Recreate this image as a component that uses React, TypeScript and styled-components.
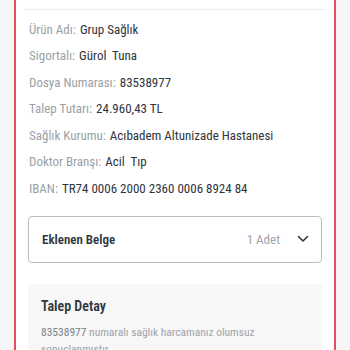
import React from "react";
import styled, { createGlobalStyle } from "styled-components";

const Global = createGlobalStyle`
  html, body { margin: 0; padding: 0; background: #f6f5f7; }
  body {
    font-family: "Roboto Condensed", "Roboto", sans-serif;
    -webkit-font-smoothing: antialiased;
  }
`;

const Page = styled.div`
  width: 350px;
  height: 350px;
  overflow: hidden;
  padding: 0 14px;
  box-sizing: border-box;
  background: #f6f5f7;
`;

const Card = styled.div`
  background: #ffffff;
  border-left: 2px solid #e2505b;
  border-right: 2px solid #e2505b;
  height: 100%;
  padding: 9px 12px 0;
  box-sizing: border-box;
`;

const Divider = styled.div`
  height: 1px;
  background: #e9ecf0;
  margin: 0 -4px 0 -4px;
`;

const InfoList = styled.div`
  display: flex;
  flex-direction: column;
  padding: 6px 0 0 1px;
`;

const Row = styled.div`
  height: 26.5px;
  display: flex;
  align-items: center;
  font-size: 13px;
  white-space: pre;
`;

const Label = styled.span`
  color: #9a9fa6;
  font-weight: 400;
  margin-right: 4px;
`;

const Value = styled.span`
  color: #30343c;
  font-weight: 400;
`;

const Accordion = styled.div`
  margin-top: 14px;
  height: 47px;
  box-sizing: border-box;
  border: 1px solid #bcbec2;
  border-radius: 4px;
  display: flex;
  align-items: center;
  padding: 0 12px 0 13px;
`;

const AccTitle = styled.div`
  flex: 1;
  font-size: 13px;
  font-weight: 600;
  color: #2f3640;
`;

const AccCount = styled.div`
  font-size: 13px;
  font-weight: 400;
  color: #a0a4ab;
  margin-right: 17px;
`;

const Detail = styled.div`
  margin-top: 21px;
  background: #f7f7f8;
  padding: 13px 13px 0;
  height: 100px;
`;

const DetailTitle = styled.div`
  font-size: 14px;
  font-weight: 600;
  color: #2f3640;
  line-height: 18px;
`;

const DetailText = styled.div`
  margin-top: 9px;
  font-size: 11.5px;
  font-weight: 400;
  line-height: 17px;
  color: #a0a4ab;
  width: 225px;
`;

const Strong = styled.span`
  color: #7a7f87;
`;

const rows: [string, string][] = [
  ["Ürün Adı:", "Grup Sağlık"],
  ["Sigortalı:", "Gürol  Tuna"],
  ["Dosya Numarası:", "83538977"],
  ["Talep Tutarı:", "24.960,43 TL"],
  ["Sağlık Kurumu:", "Acıbadem Altunizade Hastanesi"],
  ["Doktor Branşı:", "Acil  Tıp"],
  ["IBAN:", "TR74 0006 2000 2360 0006 8924 84"],
];

export default function App() {
  return (
    <>
      <Global />
      <Page>
        <Card>
          <Divider />
          <InfoList>
            {rows.map(([l, v]) => (
              <Row key={l}>
                <Label>{l}</Label>
                <Value>{v}</Value>
              </Row>
            ))}
          </InfoList>
          <Accordion>
            <AccTitle>Eklenen Belge</AccTitle>
            <AccCount>1 Adet</AccCount>
            <svg width="12" height="8" viewBox="0 0 12 8" fill="none">
              <path d="M1.5 1.5 L6 6 L10.5 1.5" stroke="#2f3640" strokeWidth="1.6" strokeLinecap="round" strokeLinejoin="round" />
            </svg>
          </Accordion>
          <Detail>
            <DetailTitle>Talep Detay</DetailTitle>
            <DetailText>
              <Strong>83538977</Strong> numaralı sağlık harcamanız olumsuz sonuçlanmıştır.
            </DetailText>
          </Detail>
        </Card>
      </Page>
    </>
  );
}
